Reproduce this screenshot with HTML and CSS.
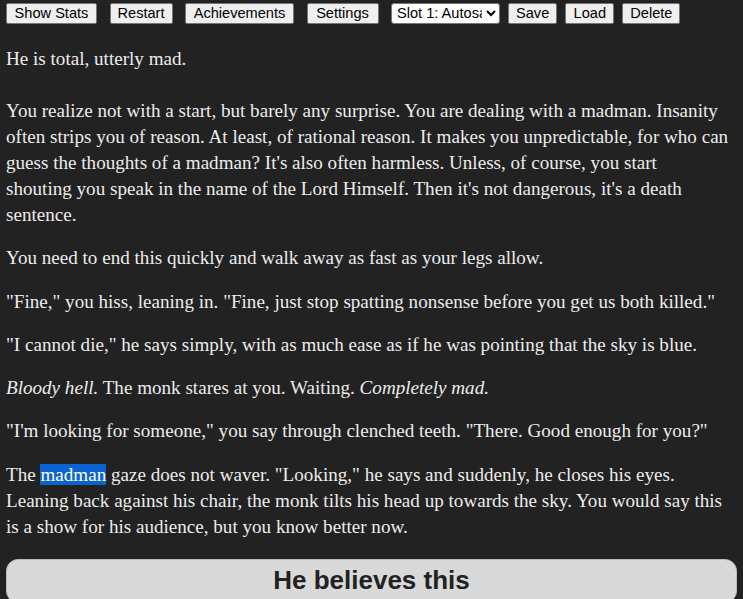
FILE: index.html
```html
<!DOCTYPE html>
<html lang="en">
<head>
    <meta charset="UTF-8">
    <title>Story</title>
    <link rel="stylesheet" href="styles.css">
</head>
<body>
    <div class="toolbar">
        <button class="b-stats">Show Stats</button>
        <button class="b-restart">Restart</button>
        <button class="b-ach">Achievements</button>
        <button class="b-settings">Settings</button>
        <select class="slot">
            <option>Slot 1: Autosave</option>
        </select>
        <button class="tight">Save</button>
        <button class="tight">Load</button>
        <button class="tight">Delete</button>
    </div>
    <div class="story">
        <p class="first">He is total, utterly mad.</p>
        <p>You realize not with a start, but barely any surprise. You are dealing with a madman. Insanity often strips you of reason. At least, of rational reason. It makes you unpredictable, for who can guess the thoughts of a madman? It's also often harmless. Unless, of course, you start<br>shouting you speak in the name of the Lord Himself. Then it's not dangerous, it's a death sentence.</p>
        <p>You need to end this quickly and walk away as fast as your legs allow.</p>
        <p>"Fine," you hiss, leaning in. "Fine, just stop spatting nonsense before you get us both killed."</p>
        <p>"I cannot die," he says simply, with as much ease as if he was pointing that the sky is blue.</p>
        <p><em>Bloody hell.</em> The monk stares at you. Waiting. <em>Completely mad.</em></p>
        <p>"I'm looking for someone," you say through clenched teeth. "There. Good enough for you?"</p>
        <p>The <span class="sel">madman</span> gaze does not waver. "Looking," he says and suddenly, he closes his eyes. Leaning back against his chair, the monk tilts his head up towards the sky. You would say this is a show for his audience, but you know better now.</p>
    </div>
    <button class="choice">He believes this</button>
</body>
</html>
```

FILE: styles.css
```css
body {
    margin: 0;
    padding: 2px 6px;
    background-color: #222222;
    color: #ececec;
    font-family: "Liberation Serif", serif;
}
.toolbar {
    display: flex;
    align-items: center;
    gap: 12.5px;
    height: 22px;
}
.toolbar button, .toolbar select {
    font-family: "Liberation Sans", Arial, sans-serif;
    font-size: 14.6px;
    height: 21px;
    padding: 0 7px;
    background: #efefef;
    color: #000;
    border: 1px solid #767676;
    border-radius: 2px;
}
.toolbar .b-stats { width: 91px; }
.toolbar .b-restart { width: 63px; }
.toolbar .b-ach { width: 109px; }
.toolbar .b-settings { width: 72px; }
.toolbar .slot {
    width: 109px;
    padding: 0 1px;
    background: #fff;
    border-radius: 3px;
}
.toolbar .tight {
    margin-left: -4.5px;
    min-width: 49px;
}
.story {
    font-size: 19.1px;
    line-height: 26px;
}
.story p {
    margin: 17.3px 0;
}
.story p.first {
    margin-top: 22px;
    margin-bottom: 26px;
}
.sel {
    background: #0b63d1;
    color: #fff;
}
.choice {
    display: block;
    width: 100%;
    margin-top: 19px;
    height: 44px;
    padding: 0;
    background: #d9d9d9;
    color: #222;
    border: 1px solid #bbb;
    border-radius: 12px;
    font-family: "Liberation Sans", Arial, sans-serif;
    font-weight: bold;
    font-size: 26px;
}
```
